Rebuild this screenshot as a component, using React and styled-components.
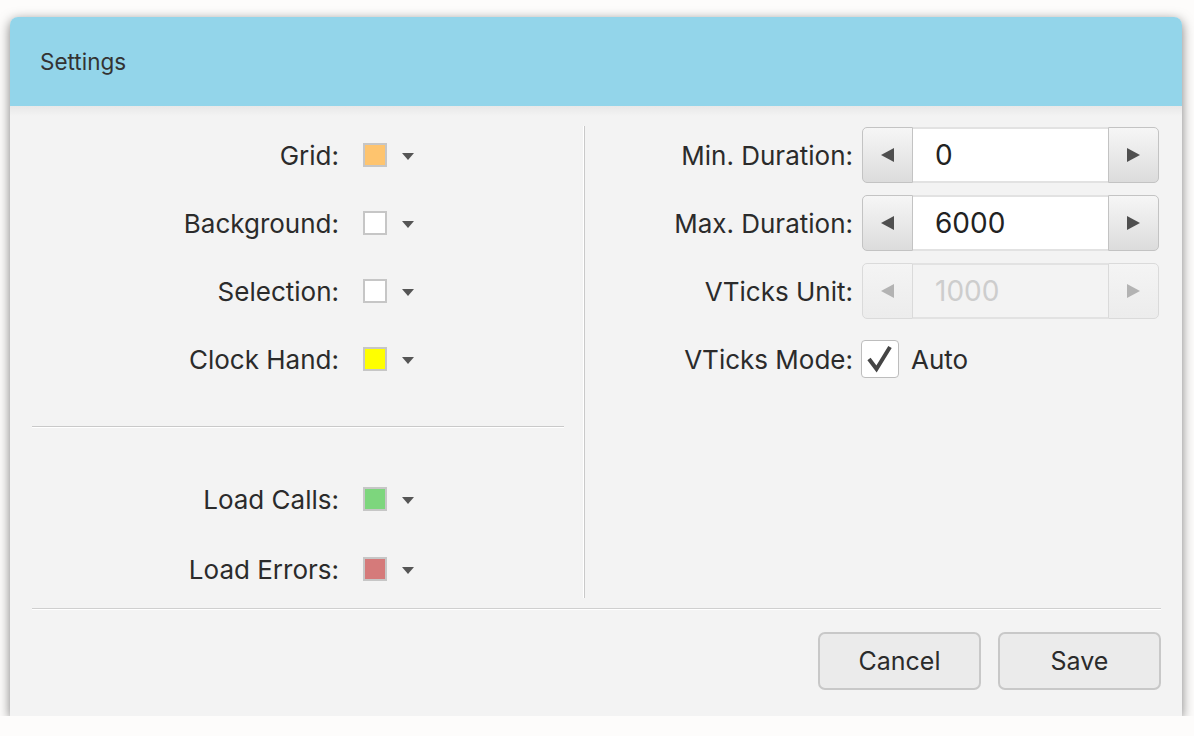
import React from 'react';
import styled, { createGlobalStyle } from 'styled-components';

const GlobalStyle = createGlobalStyle`
  body {
    margin: 0;
    background: #fdfcfb;
    font-family: Inter, "Open Sans", sans-serif;
    color: #2b2b2b;
  }
`;

const Window = styled.div`
  margin: 17px 0 0 10px;
  width: 1172px;
  height: 699px;
  background: #f3f3f3;
  border-radius: 8px 8px 0 0;
  overflow: hidden;
  box-shadow: 0 3px 12px rgba(0, 0, 0, 0.5);
  display: flex;
  flex-direction: column;
`;

const Header = styled.div`
  height: 89px;
  flex: none;
  background: #93d5ea;
  display: flex;
  align-items: center;
  padding-left: 30px;
  font-size: 22.5px;
  color: #333;
`;

const Main = styled.div`
  display: flex;
  height: 502px;
  padding: 15px 22px 0;
  box-sizing: border-box;
  background: linear-gradient(#e8e8e8, #f3f3f3 10px);
`;

const LeftCol = styled.div`
  width: 552px;
  flex: none;
`;

const VDivider = styled.div`
  width: 1px;
  margin-top: 5px;
  height: 472px;
  background: #c9c9c9;
  box-shadow: -1px 0 0 #fff;
`;

const RightCol = styled.div`
  flex: 1;
  padding-left: 1px;
`;

const Row = styled.div`
  display: flex;
  align-items: center;
  height: ${p => p.$h || 68}px;
`;

const Label = styled.div`
  flex: none;
  box-sizing: border-box;
  width: ${p => p.$w}px;
  text-align: right;
  font-size: 26px;
  padding-right: ${p => p.$pad}px;
  white-space: nowrap;
`;

const Swatch = styled.div`
  width: 20px;
  height: 20px;
  border: 2px solid #c6c6c6;
  background: ${p => p.$color};
`;

const Caret = styled.div`
  margin-left: 15px;
  width: 0;
  height: 0;
  border-left: 6px solid transparent;
  border-right: 6px solid transparent;
  border-top: 7px solid #555;
  margin-top: 2px;
`;

const HDivider = styled.div`
  width: 532px;
  height: 1px;
  background: #c9c9c9;
  box-shadow: 0 1px 0 #fff;
  margin: 33px 0 37px;
`;

const Spinner = styled.div`
  display: flex;
  width: 297px;
  height: 56px;
`;

const SpinButton = styled.div`
  width: 51px;
  box-sizing: border-box;
  border: 1.5px solid ${p => (p.$disabled ? '#dadada' : '#c3c3c3')};
  border-radius: ${p => (p.$side === 'left' ? '5px 0 0 5px' : '0 5px 5px 0')};
  background: ${p =>
    p.$disabled
      ? 'linear-gradient(#f4f4f4, #ececec)'
      : 'linear-gradient(#f6f6f6, #dcdcdc)'};
  display: flex;
  align-items: center;
  justify-content: center;
`;

const Arrow = styled.div`
  width: 0;
  height: 0;
  border-top: 7px solid transparent;
  border-bottom: 7px solid transparent;
  ${p =>
    p.$dir === 'left'
      ? `border-right: 13px solid ${p.$disabled ? '#b3b3b3' : '#4f4f4f'};`
      : `border-left: 13px solid ${p.$disabled ? '#b3b3b3' : '#4f4f4f'};`}
`;

const Field = styled.div`
  flex: 1;
  box-sizing: border-box;
  background: ${p => (p.$disabled ? '#f3f3f3' : '#fff')};
  border-top: 2px solid #e2e2e2;
  border-bottom: 2px solid #e2e2e2;
  display: flex;
  align-items: center;
  padding-left: 22px;
  font-size: 28px;
  color: ${p => (p.$disabled ? '#cdcdcd' : '#222')};
`;

const CheckRow = styled.div`
  display: flex;
  align-items: center;
  gap: 12px;
  font-size: 26px;
  margin-left: -1px;
`;

const CheckBox = styled.div`
  width: 38px;
  height: 38px;
  box-sizing: border-box;
  border: 1.5px solid #bdbdbd;
  border-radius: 4px;
  background: #fff;
  display: flex;
  align-items: center;
  justify-content: center;
`;

const Footer = styled.div`
  margin: 0 21px 0 22px;
  border-top: 1px solid #cfcfcf;
  box-shadow: inset 0 1px 0 #fff;
  display: flex;
  justify-content: flex-end;
  gap: 17px;
  padding-top: 23px;
`;

const Button = styled.button`
  width: 163px;
  height: 58px;
  box-sizing: border-box;
  border: 2px solid #c8c8c8;
  border-radius: 7px;
  background: #ebebeb;
  font-family: inherit;
  font-size: 25px;
  color: #2b2b2b;
`;

function ColorRow({ label, color, h }) {
  return (
    <Row $h={h}>
      <Label $w={331} $pad={24}>{label}</Label>
      <Swatch $color={color} />
      <Caret />
    </Row>
  );
}

function SpinRow({ label, value, disabled }) {
  return (
    <Row>
      <Label $w={276} $pad={9}>{label}</Label>
      <Spinner>
        <SpinButton $side="left" $disabled={disabled}>
          <Arrow $dir="left" $disabled={disabled} />
        </SpinButton>
        <Field $disabled={disabled}>{value}</Field>
        <SpinButton $side="right" $disabled={disabled}>
          <Arrow $dir="right" $disabled={disabled} />
        </SpinButton>
      </Spinner>
    </Row>
  );
}

export default function App() {
  return (
    <>
      <GlobalStyle />
      <Window>
        <Header>Settings</Header>
        <Main>
          <LeftCol>
            <ColorRow label="Grid:" color="#fec46e" />
            <ColorRow label="Background:" color="#ffffff" />
            <ColorRow label="Selection:" color="#ffffff" />
            <ColorRow label="Clock Hand:" color="#ffff00" />
            <HDivider />
            <ColorRow label="Load Calls:" color="#7dd67d" h={70} />
            <ColorRow label="Load Errors:" color="#d57a7a" h={70} />
          </LeftCol>
          <VDivider />
          <RightCol>
            <SpinRow label="Min. Duration:" value="0" />
            <SpinRow label="Max. Duration:" value="6000" />
            <SpinRow label="VTicks Unit:" value="1000" disabled />
            <Row>
              <Label $w={276} $pad={9}>VTicks Mode:</Label>
              <CheckRow>
                <CheckBox>
                  <svg width="30" height="30" viewBox="0 0 30 30">
                    <path d="M4 15 L11.5 25 L25 3" fill="none" stroke="#444" strokeWidth="4" />
                  </svg>
                </CheckBox>
                Auto
              </CheckRow>
            </Row>
          </RightCol>
        </Main>
        <Footer>
          <Button>Cancel</Button>
          <Button>Save</Button>
        </Footer>
      </Window>
    </>
  );
}
